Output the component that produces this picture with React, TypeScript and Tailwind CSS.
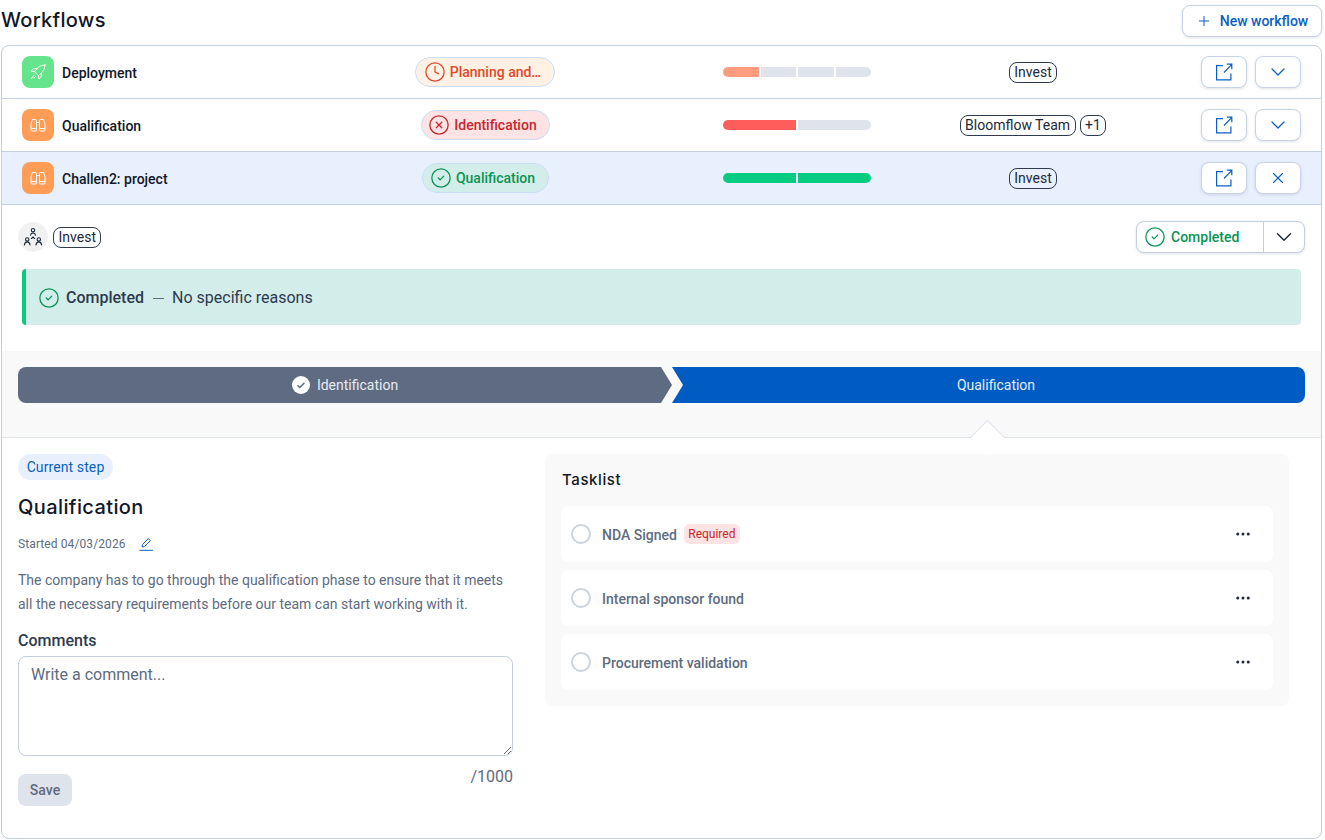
import { CircleCheck, CircleX, Clock, ChevronDown, Ellipsis, Plus, X } from 'lucide-react';

const heading = "font-['Inter',sans-serif]";

function RocketIcon() {
  return (
    <svg width="18" height="18" viewBox="0 0 18 18" fill="none" stroke="#ffffff" strokeWidth="1" strokeLinejoin="round" strokeLinecap="round">
      <path d="M16 2c-3.400.2-6 1.300-8 3.600L5.400 8.600l4 4 3-2.600C14.700 8 15.800 5.400 16 2z" />
      <path d="M5.400 8.600L2 8.200l2.500-2.500L8 5.600" />
      <path d="M9.400 12.600l.4 3.400 2.500-2.500.1-3.500" />
      <path d="M5 12l-2.500 3.500M6.500 13.500L5 15" />
    </svg>
  );
}

function BinocularsIcon() {
  return (
    <svg width="18" height="18" viewBox="0 0 18 18" fill="none" stroke="#ffffff" strokeWidth="1" strokeLinejoin="round">
      <path d="M4 3.500h2.500a1 1 0 0 1 1 1V14a1 1 0 0 1-1 1H3a1 1 0 0 1-1-1V8.500C2 6.500 3 5.500 3 4.500a1 1 0 0 1 1-1z" />
      <path d="M14 3.500h-2.500a1 1 0 0 0-1 1V14a1 1 0 0 0 1 1H15a1 1 0 0 0 1-1V8.500C16 6.500 15 5.500 15 4.500a1 1 0 0 0-1-1z" />
      <path d="M7.500 6.500h3M2 12.500h5.500M10.500 12.500H16" />
    </svg>
  );
}

function ExternalIcon() {
  return (
    <svg width="18" height="18" viewBox="0 0 18 18" fill="none" stroke="#0a5fc4" strokeWidth="1.200">
      <path d="M8 2.600H1.600v14.300h14.300v-6.400" />
      <path d="M9 9.500l7.600-7.900M11.800 1.200h5v5" />
    </svg>
  );
}

function TeamIcon() {
  return (
    <svg width="20" height="20" viewBox="0 0 20 20" fill="none" stroke="#1d2939" strokeWidth="1.100" strokeLinecap="round">
      <circle cx="10" cy="3.200" r="1.700" />
      <path d="M7.600 8.300c.2-1.500 1.200-2.300 2.400-2.300s2.200.8 2.400 2.300" />
      <circle cx="4.200" cy="12.400" r="1.700" />
      <path d="M1.400 18c.2-2 1.400-3.100 2.800-3.100s2.600 1.100 2.800 3.100" />
      <circle cx="15.800" cy="12.400" r="1.700" />
      <path d="M13 18c.2-2 1.400-3.100 2.800-3.100s2.600 1.100 2.800 3.100" />
      <path d="M8.500 11.500L10 10l1.500 1.500" />
    </svg>
  );
}

function Tag({ label }: { label: string }) {
  return (
    <span className="inline-flex h-[21px] items-center rounded-lg border border-[#2d3a4f] px-[4.5px] text-sm leading-none text-[#1d2939]">
      {label}
    </span>
  );
}

function ActionButton({ children }: { children: React.ReactNode }) {
  return (
    <button className="flex h-8 w-[46px] items-center justify-center rounded-lg border border-[#c8d3e6] bg-white shadow-[0_1px_3px_rgba(45,58,79,0.15)]">
      {children}
    </button>
  );
}

const rows = [
  {
    name: 'Deployment',
    icon: <RocketIcon />,
    iconBg: 'bg-[#66e48c]',
    badge: 'Planning and…',
    badgeClass: 'bg-[#fff2e5] text-[#e0492b] w-[140px]',
    badgeIcon: <Clock size={22} strokeWidth={1.4} />,
    segments: ['bg-[#ff9b7f]', 'bg-[#dfe3eb]', 'bg-[#dfe3eb]', 'bg-[#dfe3eb]'],
    teams: ['Invest'],
    open: false,
    rowClass: '',
  },
  {
    name: 'Qualification',
    icon: <BinocularsIcon />,
    iconBg: 'bg-[#ff9d57]',
    badge: 'Identification',
    badgeClass: 'bg-[#fde3e3] text-[#c9252d] w-[129px]',
    badgeIcon: <CircleX size={22} strokeWidth={1.4} />,
    segments: ['bg-[#ff5c5c]', 'bg-[#dfe3eb]'],
    teams: ['Bloomflow Team', '+1'],
    open: false,
    rowClass: '',
  },
  {
    name: 'Challen2: project',
    icon: <BinocularsIcon />,
    iconBg: 'bg-[#ff9d57]',
    badge: 'Qualification',
    badgeClass: 'bg-[#d3edea] text-[#0a9454] w-[127px]',
    badgeIcon: <CircleCheck size={22} strokeWidth={1.4} />,
    segments: ['bg-[#06cc82]', 'bg-[#06cc82]'],
    teams: ['Invest'],
    open: true,
    rowClass: 'bg-[#e8f0fe]',
  },
];

const tasks = ['NDA Signed', 'Internal sponsor found', 'Procurement validation'];

export default function App() {
  return (
    <div className="h-[840px] overflow-hidden bg-white font-['Roboto',sans-serif] text-[#1d2939]">
      <div className="ml-px mr-[3px]">
        {/* Titre */}
        <div className="flex h-[45px] items-start justify-between pt-[5px]">
          <h1 className={`${heading} text-xl leading-[30px] font-medium tracking-[0.3px] text-[#101828]`}>Workflows</h1>
          <button className="flex h-8 w-[140px] items-center justify-center gap-2 rounded-lg border border-[#c8d3e6] bg-white text-sm font-medium text-[#0a5fc4] shadow-[0_1px_3px_rgba(45,58,79,0.15)]">
            <Plus size={16} strokeWidth={1.5} />
            New workflow
          </button>
        </div>

        <div className="h-[794px] rounded-lg border border-[#c3cede]">
          {rows.map((row) => (
            <div
              key={row.name}
              className={`grid h-[53px] grid-cols-[303px_320px_304px_168px_184px] items-center border-b border-[#c3cede] pl-5 pr-5 ${row.rowClass}`}
            >
              <div className="flex items-center gap-2">
                <div className={`flex h-8 w-8 items-center justify-center rounded-lg ${row.iconBg}`}>{row.icon}</div>
                <span className="pt-[2px] text-sm font-medium text-[#101828]">{row.name}</span>
              </div>
              <div className="flex justify-center">
                <span className={`flex h-[30px] items-center justify-center gap-1 rounded-full border border-[#c9dcf8] pr-[5px] text-sm font-medium ${row.badgeClass}`}>
                  {row.badgeIcon}
                  {row.badge}
                </span>
              </div>
              <div className="flex justify-center">
                <div className="flex h-[10px] w-[148px] gap-[2px] overflow-hidden rounded-full">
                  {row.segments.map((seg, i) => (
                    <div key={i} className={`flex-1 ${seg}`} />
                  ))}
                </div>
              </div>
              <div className="flex justify-center gap-1">
                {row.teams.map((team) => (
                  <Tag key={team} label={team} />
                ))}
              </div>
              <div className="flex justify-end gap-2">
                <ActionButton>
                  <ExternalIcon />
                </ActionButton>
                <ActionButton>
                  {row.open ? (
                    <X size={18} strokeWidth={1.5} className="text-[#0a5fc4]" />
                  ) : (
                    <ChevronDown size={24} strokeWidth={1.3} className="text-[#0a5fc4]" />
                  )}
                </ActionButton>
              </div>
            </div>
          ))}

          {/* Detalle */}
          <div className="px-4 pt-4">
            <div className="flex items-center justify-between">
              <div className="flex items-center gap-[5px]">
                <div className="flex h-[30px] w-[30px] items-center justify-center rounded-full bg-[#f1f1f1]">
                  <TeamIcon />
                </div>
                <Tag label="Invest" />
              </div>
              <div className="flex h-8 w-[169px] overflow-hidden rounded-lg border border-[#c3cede] bg-white shadow-[0_1px_3px_rgba(45,58,79,0.15)]">
                <div className="flex w-[127px] items-center gap-[5px] border-r border-[#c3cede] pl-[7px] text-sm font-medium text-[#0a9454]">
                  <CircleCheck size={22} strokeWidth={1.4} />
                  Completed
                </div>
                <div className="flex flex-1 items-center justify-center">
                  <ChevronDown size={26} strokeWidth={1.3} className="text-[#1d2939]" />
                </div>
              </div>
            </div>
            <div className="mx-1 mt-4 flex h-14 items-center rounded border-l-4 border-[#06cc82] bg-[#d3edea] pl-3 pt-[2px] text-base text-[#2d3a4f]">
              <CircleCheck size={22} strokeWidth={1.4} className="text-[#0a9454]" />
              <span className="ml-[6px] font-medium">Completed</span>
              <span className="ml-[9px] h-px w-[11px] bg-[#5e6b80]" />
              <span className="ml-[8px]">No specific reasons</span>
            </div>
          </div>

          {/* Stepper */}
          <div className="relative mt-[26px] h-[87px] border-b border-[#dfe3eb] bg-[#f9f9f9] px-4 pt-4">
            <div className="flex h-9 text-sm text-[#e6ecf5]">
              <div className="flex w-[654px] items-center justify-center gap-[7px] rounded-l-lg bg-[#5e6b80] [clip-path:polygon(0_0,643px_0,100%_50%,643px_100%,0_100%)]">
                <span className="flex h-[18px] w-[18px] items-center justify-center rounded-full bg-white">
                  <svg width="10" height="10" viewBox="0 0 10 10" fill="none" stroke="#5e6b80" strokeWidth="1.500">
                    <path d="M1.500 5.200l2.300 2.300 4.700-4.800" />
                  </svg>
                </span>
                Identification
              </div>
              <div className="flex flex-1 items-center justify-center rounded-r-lg bg-[#005cc2] pl-[15px] [clip-path:polygon(0_0,100%_0,100%_100%,0_100%,11px_50%)]">
                Qualification
              </div>
            </div>
            <div className="absolute bottom-[-13px] left-[973px] h-[25px] w-[25px] rotate-45 border-l border-t border-[#dfe3eb] bg-white" />
          </div>

          <div className="flex gap-8 pl-4 pt-4">
            {/* Colonne gauche */}
            <div className="w-[495px]">
              <span className="flex h-[26px] w-[95px] items-center justify-center rounded-full bg-[#e8f0fe] text-sm tracking-[0.1px] text-[#0a5fc4]">
                Current step
              </span>
              <h2 className={`${heading} mt-3 text-xl leading-[30px] font-medium tracking-[0.4px] text-[#101828]`}>Qualification</h2>
              <div className="mt-[13px] flex h-[18px] items-center gap-[13px] text-xs tracking-[0.1px] text-[#5e6b80]">
                Started 04/03/2026
                <svg width="14" height="14" viewBox="0 0 14 14" fill="none" stroke="#0a5fc4" strokeWidth="1">
                  <path d="M3 10l.6-2.600L9.300 1.600l2.100 2.100L5.600 9.500z" />
                  <path d="M.500 13.300h13.500" />
                </svg>
              </div>
              <p className="mt-[15px] text-sm leading-6 text-[#5e6b80]">
                The company has to go through the qualification phase to ensure that it meets all the necessary requirements before our team can start working with it.
              </p>
              <label className="mt-[13px] block text-base leading-6 font-medium text-[#2d3a4f]">Comments</label>
              <textarea
                placeholder="Write a comment..."
                className="mt-[3px] block h-[100px] w-full rounded-lg border border-[#c3cede] px-3 pb-[5px] pt-[6px] text-base leading-6 placeholder:text-[#5e6b80]"
              />
              <div className="mt-[9px] flex items-start justify-between">
                <button className="mt-[9px] h-8 w-[54px] rounded-lg bg-[#dfe3eb] text-sm font-medium text-[#5e6b80]">Save</button>
                <span className="text-base leading-6 text-[#5e6b80]">/1000</span>
              </div>
            </div>

            {/* Tasklist */}
            <div className="h-[252px] w-[744px] rounded-lg bg-[#f9f9f9] p-4">
              <h3 className={`${heading} ml-px text-[15px] leading-5 font-medium tracking-[0.6px] text-[#101828]`}>Tasklist</h3>
              <div className="mt-4 flex flex-col gap-2">
                {tasks.map((task, i) => (
                  <div key={task} className="flex h-14 items-center rounded-lg bg-white pl-[10px] pr-[21px]">
                    <span className="h-5 w-5 rounded-full border-2 border-[#cdd3dc]" />
                    <span className="ml-[11px] pt-[2px] text-sm font-medium text-[#5e6b80]">{task}</span>
                    {i === 0 && (
                      <span className="ml-[7px] flex h-5 w-14 items-center justify-center rounded-md bg-[#fde3e3] text-xs text-[#c9252d]">Required</span>
                    )}
                    <Ellipsis size={18} strokeWidth={2} className="ml-auto text-[#1d2939]" />
                  </div>
                ))}
              </div>
            </div>
          </div>
        </div>
      </div>
    </div>
  );
}
